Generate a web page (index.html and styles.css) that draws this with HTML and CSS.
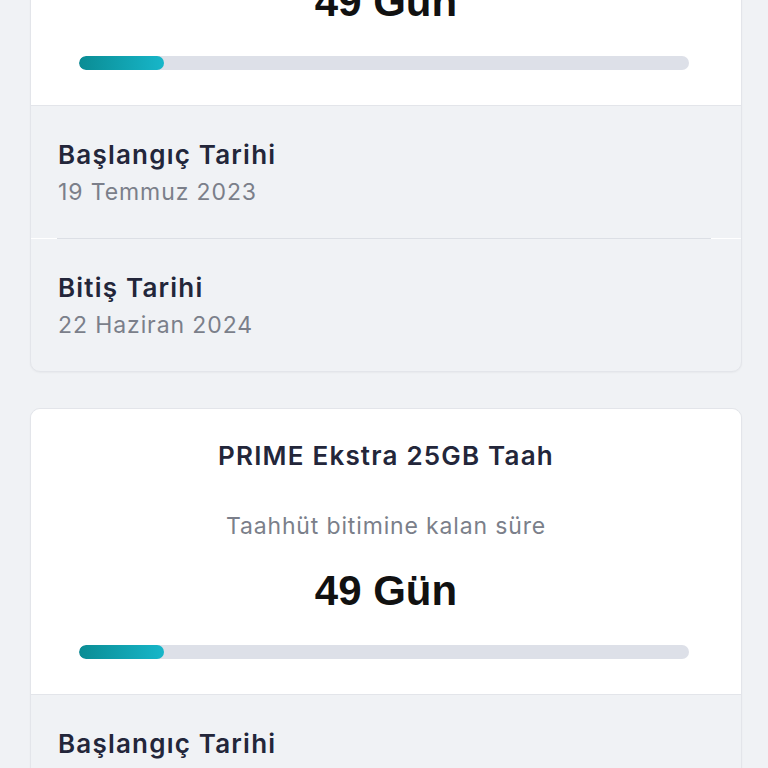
FILE: index.html
```html
<!DOCTYPE html>
<html lang="tr">
<head>
<meta charset="utf-8">
<link rel="stylesheet" href="styles.css">
</head>
<body>
<div class="list">
  <div class="card">
    <div class="card-top">
      <div class="title">PRIME Ekstra 25GB Taah</div>
      <div class="subtitle">Taahhüt bitimine kalan süre</div>
      <div class="days">49 Gün</div>
      <div class="bar"><div class="fill" style="width:14%"></div></div>
    </div>
    <div class="card-bottom">
      <div class="row">
        <div class="label">Başlangıç Tarihi</div>
        <div class="value">19 Temmuz 2023</div>
      </div>
      <div class="divider"></div>
      <div class="row">
        <div class="label">Bitiş Tarihi</div>
        <div class="value">22 Haziran 2024</div>
      </div>
    </div>
  </div>
  <div class="card">
    <div class="card-top">
      <div class="title">PRIME Ekstra 25GB Taah</div>
      <div class="subtitle">Taahhüt bitimine kalan süre</div>
      <div class="days">49 Gün</div>
      <div class="bar"><div class="fill" style="width:14%"></div></div>
    </div>
    <div class="card-bottom">
      <div class="row">
        <div class="label">Başlangıç Tarihi</div>
        <div class="value">19 Temmuz 2023</div>
      </div>
      <div class="divider"></div>
      <div class="row">
        <div class="label">Bitiş Tarihi</div>
        <div class="value">22 Haziran 2024</div>
      </div>
    </div>
  </div>
</div>
</body>
</html>
```

FILE: styles.css
```css
html, body {
  margin: 0;
  padding: 0;
  background: #f0f2f5;
  overflow: hidden;
  height: 768px;
}
body {
  font-family: "Inter", "Noto Sans", sans-serif;
}
.list {
  display: flex;
  flex-direction: column;
  gap: 36px;
  margin-top: -181px;
  padding: 0 26px 0 30px;
}
.card {
  background: #f0f2f5;
  border: 1px solid #e3e5ea;
  border-radius: 10px;
  overflow: hidden;
  box-shadow: 0 1px 2px rgba(0,0,0,0.04);
}
.card-top {
  background: #ffffff;
  border-bottom: 1px solid #e3e5ea;
  display: flex;
  flex-direction: column;
  align-items: center;
  padding: 31px 0 35px;
}
.title {
  font-size: 26px;
  line-height: 32px;
  font-weight: 600;
  letter-spacing: 1.2px;
  color: #23263a;
}
.subtitle {
  margin-top: 39px;
  font-size: 23px;
  line-height: 30px;
  letter-spacing: 0.85px;
  color: #7b7f8a;
}
.days {
  margin-top: 25px;
  font-family: "Liberation Sans", "Roboto", sans-serif;
  font-weight: 700;
  font-size: 42px;
  line-height: 50px;
  color: #111111;
}
.bar {
  align-self: stretch;
  margin: 29px 52px 0 48px;
  height: 14px;
  border-radius: 7px;
  background: #dde0e8;
  overflow: hidden;
}
.fill {
  height: 100%;
  border-radius: 7px;
  background: linear-gradient(90deg, #0a8c94, #17b6c9);
}
.row {
  padding: 33px 27px 31px;
}
.label {
  font-size: 26px;
  line-height: 32px;
  font-weight: 600;
  letter-spacing: 1.2px;
  color: #23263a;
}
.value {
  margin-top: 6px;
  font-size: 23px;
  line-height: 30px;
  letter-spacing: 0.9px;
  color: #7b7f8a;
}
.divider {
  height: 1px;
  background: #ffffff;
  padding: 0 30px 0 26px;
}
.divider::before {
  content: "";
  display: block;
  height: 1px;
  background: #dcdfe5;
}
```
